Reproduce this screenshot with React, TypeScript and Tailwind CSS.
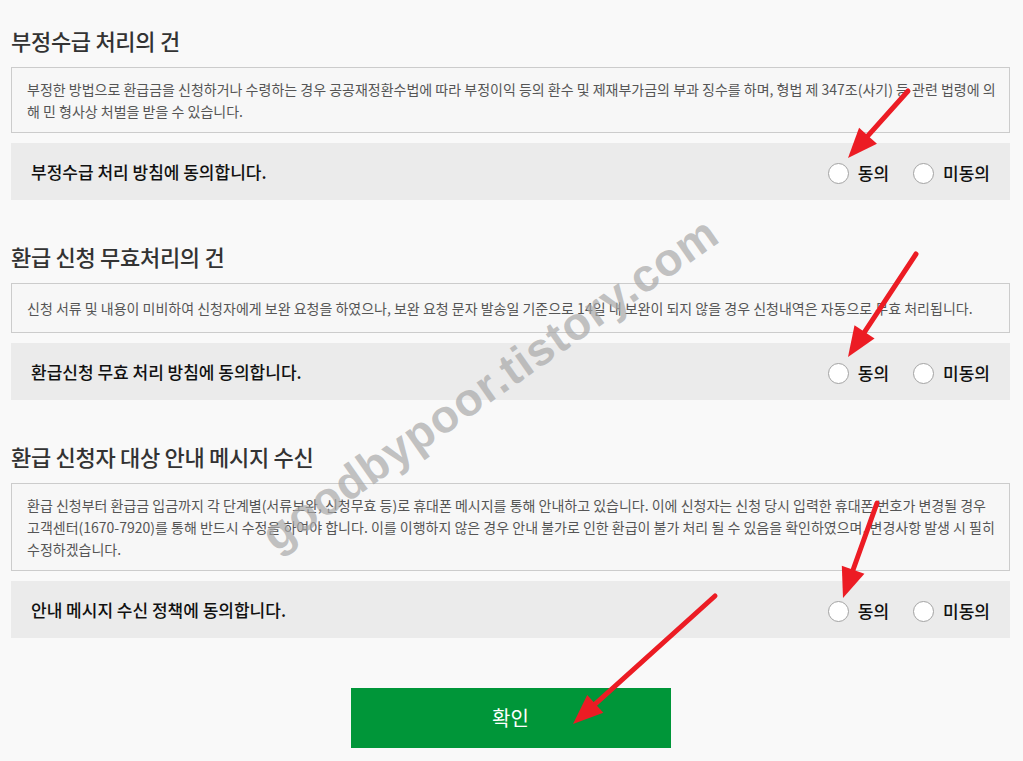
import React from "react";

interface Section {
  title: string;
  lines: string[];
  agree: string;
}

const sections: Section[] = [
  {
    title: "부정수급 처리의 건",
    lines: [
      "부정한 방법으로 환급금을 신청하거나 수령하는 경우 공공재정환수법에 따라 부정이익 등의 환수 및 제재부가금의 부과 징수를 하며, 형법 제 347조(사기) 등 관련 법령에 의",
      "해 민 형사상 처벌을 받을 수 있습니다.",
    ],
    agree: "부정수급 처리 방침에 동의합니다.",
  },
  {
    title: "환급 신청 무효처리의 건",
    lines: [
      "신청 서류 및 내용이 미비하여 신청자에게 보완 요청을 하였으나, 보완 요청 문자 발송일 기준으로 14일 내 보완이 되지 않을 경우 신청내역은 자동으로 무효 처리됩니다.",
    ],
    agree: "환급신청 무효 처리 방침에 동의합니다.",
  },
  {
    title: "환급 신청자 대상 안내 메시지 수신",
    lines: [
      "환급 신청부터 환급금 입금까지 각 단계별(서류보완, 신청무효 등)로 휴대폰 메시지를 통해 안내하고 있습니다. 이에 신청자는 신청 당시 입력한 휴대폰 번호가 변경될 경우",
      "고객센터(1670-7920)를 통해 반드시 수정을 하여야 합니다. 이를 이행하지 않은 경우 안내 불가로 인한 환급이 불가 처리 될 수 있음을 확인하였으며, 변경사항 발생 시 필히",
      "수정하겠습니다.",
    ],
    agree: "안내 메시지 수신 정책에 동의합니다.",
  },
];

function Radio({ name, label }: { name: string; label: string }) {
  return (
    <label className="flex items-center gap-[9px] cursor-pointer">
      <input
        type="radio"
        name={name}
        className="appearance-none w-[21px] h-[21px] rounded-full border border-[#a3a3a3] bg-white checked:border-[6px] checked:border-[#009639]"
      />
      <span className="text-[17px] leading-6 font-medium text-[#111]">{label}</span>
    </label>
  );
}

function Arrow({ x1, y1, x2, y2 }: { x1: number; y1: number; x2: number; y2: number }) {
  // head sits on (x2,y2)
  const a = Math.atan2(y2 - y1, x2 - x1);
  const len = 30;
  const half = 12;
  const bx = x2 - Math.cos(a) * len;
  const by = y2 - Math.sin(a) * len;
  const px = -Math.sin(a) * half;
  const py = Math.cos(a) * half;
  const lx = x2 - Math.cos(a) * (len - 4);
  const ly = y2 - Math.sin(a) * (len - 4);
  return (
    <g>
      <line x1={x1} y1={y1} x2={lx} y2={ly} stroke="#ec1c24" strokeWidth={5} strokeLinecap="round" />
      <polygon points={`${x2},${y2} ${bx + px},${by + py} ${bx - px},${by - py}`} fill="#ec1c24" />
    </g>
  );
}

export default function App() {
  return (
    <div className="relative min-h-screen bg-[#f9f9f9] font-['Noto_Sans_CJK_KR',sans-serif] overflow-hidden">
      <div className="w-[999px] ml-[11px] pt-[30px] pb-[12px]">
        {sections.map((s, i) => (
          <section key={i} className={i > 0 ? "mt-[46px]" : ""}>
            <h2 className="text-[22px] leading-[20px] font-medium text-[#333] tracking-[-0.3px]">{s.title}</h2>
            <div className="mt-[17px] min-h-[50px] flex flex-col justify-center border border-[#cccccc] bg-[#f7f7f7] pl-[15px] pr-[4px] py-[10px] text-[14px] leading-[22px] text-[#555]">
              {s.lines.map((l, j) => (
                <span key={j} className="block whitespace-nowrap">
                  {l}
                </span>
              ))}
            </div>
            <div className="mt-[10px] h-[57px] bg-[#ebebeb] flex items-center justify-between pl-[20px] pr-[20px]">
              <p className="text-[17px] font-medium text-[#111]">{s.agree}</p>
              <div className="flex items-center gap-[24px] pt-[3px]">
                <Radio name={`agree-${i}`} label="동의" />
                <Radio name={`agree-${i}`} label="미동의" />
              </div>
            </div>
          </section>
        ))}
        <div className="flex justify-center mt-[50px]">
          <button className="w-[320px] h-[60px] bg-[#009639] text-white text-[20px]">확인</button>
        </div>
      </div>

      <div className="pointer-events-none absolute left-[490px] top-[384px] -translate-x-1/2 -translate-y-1/2 -rotate-[35deg] whitespace-nowrap font-['Liberation_Sans',sans-serif] font-bold text-[46px] text-[#a8a8a8]/70 tracking-[1px]">
        goodbypoor.tistory.com
      </div>

      <svg className="pointer-events-none absolute left-0 top-0" width={1023} height={761}>
        <Arrow x1={908} y1={91} x2={848} y2={158} />
        <Arrow x1={916} y1={254} x2={848} y2={357} />
        <Arrow x1={877} y1={503} x2={843} y2={598} />
        <Arrow x1={715} y1={596} x2={573} y2={724} />
      </svg>
    </div>
  );
}
